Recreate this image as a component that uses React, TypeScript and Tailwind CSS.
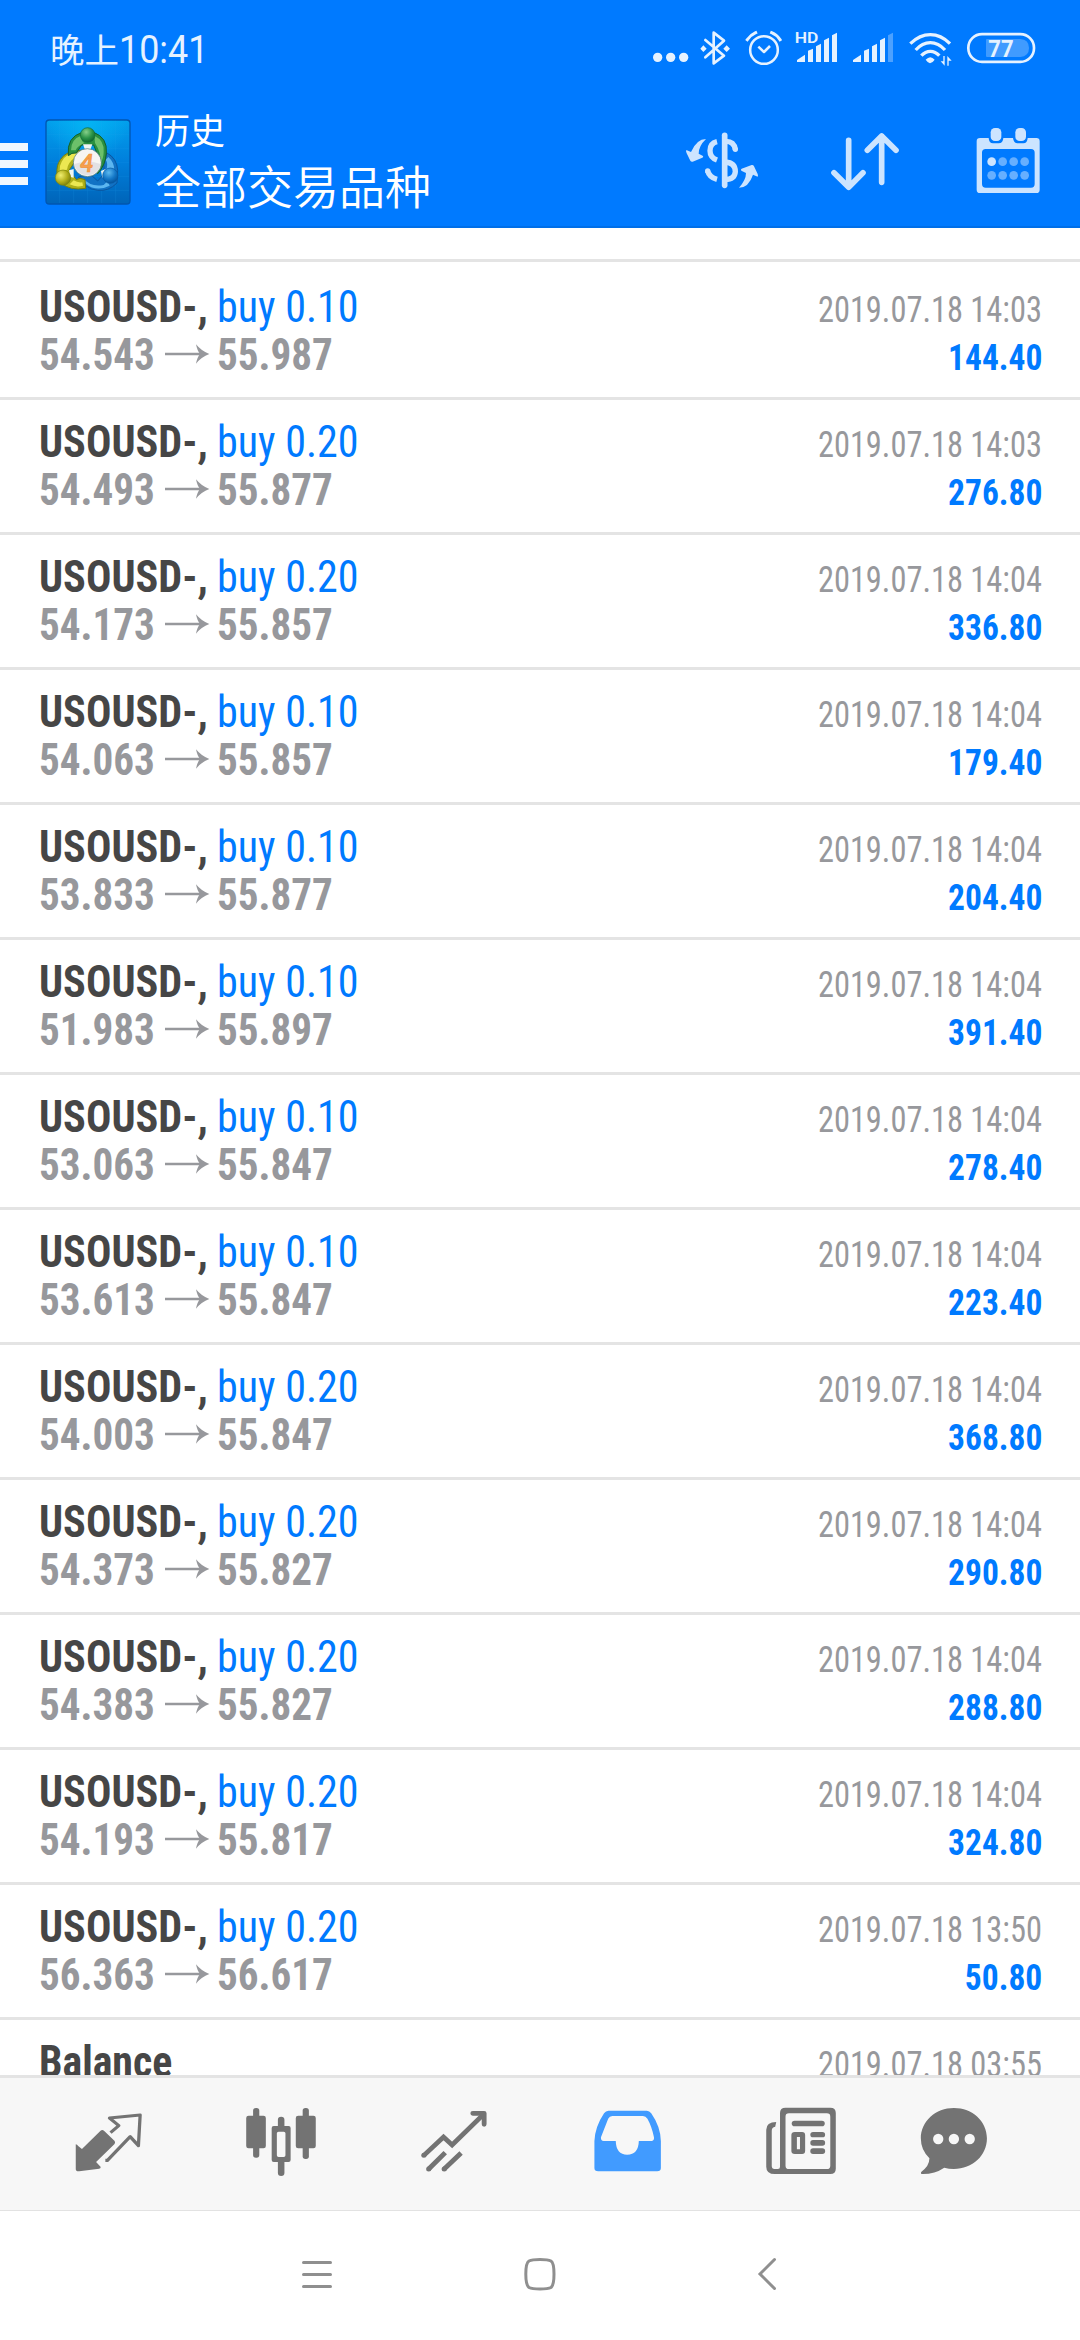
import type { ReactNode } from "react";

type Deal = { volume: string; open: string; close: string; time: string; profit: string };

const deals: Deal[] = [
  { volume: "0.10", open: "54.543", close: "55.987", time: "2019.07.18 14:03", profit: "144.40" },
  { volume: "0.20", open: "54.493", close: "55.877", time: "2019.07.18 14:03", profit: "276.80" },
  { volume: "0.20", open: "54.173", close: "55.857", time: "2019.07.18 14:04", profit: "336.80" },
  { volume: "0.10", open: "54.063", close: "55.857", time: "2019.07.18 14:04", profit: "179.40" },
  { volume: "0.10", open: "53.833", close: "55.877", time: "2019.07.18 14:04", profit: "204.40" },
  { volume: "0.10", open: "51.983", close: "55.897", time: "2019.07.18 14:04", profit: "391.40" },
  { volume: "0.10", open: "53.063", close: "55.847", time: "2019.07.18 14:04", profit: "278.40" },
  { volume: "0.10", open: "53.613", close: "55.847", time: "2019.07.18 14:04", profit: "223.40" },
  { volume: "0.20", open: "54.003", close: "55.847", time: "2019.07.18 14:04", profit: "368.80" },
  { volume: "0.20", open: "54.373", close: "55.827", time: "2019.07.18 14:04", profit: "290.80" },
  { volume: "0.20", open: "54.383", close: "55.827", time: "2019.07.18 14:04", profit: "288.80" },
  { volume: "0.20", open: "54.193", close: "55.817", time: "2019.07.18 14:04", profit: "324.80" },
  { volume: "0.20", open: "56.363", close: "56.617", time: "2019.07.18 13:50", profit: "50.80" },
];

function StatusBar() {
  return (
    <div className="flex h-[100px] items-start justify-between pl-[50px] pr-[44px] pt-[30px] text-[#e6f2ff]">
      <div className="-mt-px flex h-[38px] items-baseline whitespace-nowrap leading-[38px]">
        <span className="font-['Noto_Sans_CJK_SC',sans-serif] text-[34.5px]">晚上</span>
        <span className="origin-left scale-x-[0.92] font-[Roboto,sans-serif] text-[39px]">10:41</span>
      </div>
      <div className="flex h-[37px]">
        <svg className="h-[37px] w-[36px]" viewBox="39 90 108 111" fill="currentColor">
          <circle cx="53" cy="172" r="14" />
          <circle cx="92" cy="172" r="14" />
          <circle cx="131" cy="172" r="14" />
        </svg>
        <svg className="ml-[11px] h-[37px] w-[31px]" viewBox="180 90 93 111" fill="none" stroke="currentColor" strokeWidth="8">
          <path d="M196 120 L252 167 L221 190 V98 L252 122 L196 172" strokeLinejoin="round" strokeLinecap="round" />
          <path d="M181 146 l9 -10 l10 10 l-10 10z M250 146 l10 -10 l10 10 l-10 10z" fill="currentColor" stroke="none" />
        </svg>
        <svg className="ml-[14px] h-[37px] w-[37px]" viewBox="315 90 111 111" fill="none" stroke="currentColor" strokeWidth="7.500">
          <circle cx="372" cy="150" r="41.500" />
          <path d="M355 140 L372 156 L390 138" strokeLinejoin="round" />
          <path d="M322 119 Q333 104 347 98 M395 98 Q410 104 420 119" strokeWidth="9" strokeLinecap="square" />
        </svg>
        <svg className="ml-[13px] h-[37px] w-[43px]" viewBox="465 90 129 111" fill="currentColor">
          <text x="464" y="129" fontFamily="Roboto, sans-serif" fontWeight="600" fontSize="46" textLength="71" lengthAdjust="spacingAndGlyphs">HD</text>
          <path d="M471 186 V180 L495 164 V186z M504 186 V152 L519 146 V186z M528 186 V139 L543 131 V186z M552 186 V121 L567 113 V186z M576 186 V106 L591 98 V186z" />
        </svg>
        <svg className="ml-[14px] h-[37px] w-[42px]" viewBox="636 90 126 111" fill="currentColor">
          <path d="M639 186 V180 L663 164 V186z M672 186 V152 L687 146 V186z M696 186 V139 L711 131 V186z M720 186 V121 L735 113 V186z" />
          <path d="M744 186 V106 L759 98 V186z" opacity="0.33" />
        </svg>
        <svg className="ml-[14px] h-[37px] w-[45px]" viewBox="804 90 135 111" fill="none" stroke="currentColor" strokeWidth="10">
          <path d="M811 131 Q839 104 871 104 Q903 104 930 131 M827 150 Q847 128 871 128 Q895 128 915 150 M844 167 Q856 154 871 154 Q886 154 898 167" />
          <path d="M857 179 Q871 164 884 179 Q878 188 870 190 Q863 188 857 179z" fill="currentColor" stroke="none" />
          <path d="M910 168 H914 V197 L902 184 H910z M922 197 V168 L935 182 H926 V197z" fill="currentColor" stroke="none" />
        </svg>
        <svg className="ml-[13px] h-[37px] w-[70px]" viewBox="978 90 210 111" fill="none">
          <rect x="985" y="102.500" width="197" height="83" rx="41" stroke="currentColor" strokeWidth="8" />
          <path d="M1041 117 H1141 Q1167 119 1167 144 Q1167 169 1141 171 H1041 Q1038 171 1038 168 V120 Q1038 117 1041 117z" fill="#409bff" />
          <text x="1045" y="170" fill="currentColor" fontFamily="Roboto, sans-serif" fontWeight="700" fontSize="74" textLength="76" lengthAdjust="spacingAndGlyphs">77</text>
        </svg>
      </div>
    </div>
  );
}

function Logo() {
  return (
    <svg className="ml-[17px] mt-[19px] h-[86px] w-[86px] shrink-0" viewBox="46 58 258 258">
      <defs>
        <linearGradient id="sky" x1="0" y1="0" x2="0" y2="1">
          <stop offset="0" stopColor="#02a0ec" />
          <stop offset="0.5" stopColor="#007fdc" />
          <stop offset="1" stopColor="#0064b8" />
        </linearGradient>
        <radialGradient id="glow" cx="0.5" cy="0" r="0.5">
          <stop offset="0" stopColor="#04b4f4" />
          <stop offset="1" stopColor="#04b4f4" stopOpacity="0" />
        </radialGradient>
        <radialGradient id="green" cx="0.4" cy="0.3" r="0.7">
          <stop offset="0" stopColor="#86d08a" />
          <stop offset="0.6" stopColor="#2c9448" />
          <stop offset="1" stopColor="#116a30" />
        </radialGradient>
        <radialGradient id="yellow" cx="0.35" cy="0.35" r="0.7">
          <stop offset="0" stopColor="#f0ee70" />
          <stop offset="0.6" stopColor="#b4b01c" />
          <stop offset="1" stopColor="#7c800c" />
        </radialGradient>
        <radialGradient id="blue" cx="0.4" cy="0.3" r="0.7">
          <stop offset="0" stopColor="#5cb8ee" />
          <stop offset="0.6" stopColor="#1478c8" />
          <stop offset="1" stopColor="#0456a0" />
        </radialGradient>
      </defs>
      <rect x="49" y="61" width="252" height="252" rx="10" fill="url(#sky)" stroke="#0056b0" strokeWidth="4" />
      <rect x="51" y="63" width="248" height="248" rx="8" fill="url(#glow)" />
      <path d="M90 63V310M132 63V310M174 63V310M216 63V310M258 63V310M52 104H298M52 146H298M52 188H298M52 230H298M52 272H298" stroke="#28a4f0" strokeWidth="1.500" opacity="0.3" />
      <path d="M232 160 Q262 176 264 212 L262 250 Q236 276 204 272 Q166 268 146 232 L180 222 L204 244 L224 222 L222 190z" fill="#1272c4" stroke="#0a56a0" strokeWidth="3" />
      <path d="M236 172 Q254 188 254 212 L230 210 Q236 190 228 180z M160 236 Q184 264 222 256 L232 246 Q240 254 240 258 Q200 278 168 252z" fill="#5cb6f0" />
      <path d="M156 152 Q112 150 92 180 Q80 196 82 222 L96 250 Q120 274 168 266 L166 240 Q150 232 140 240 L118 212 L134 188z" fill="#aeb01a" stroke="#76800c" strokeWidth="3" />
      <path d="M142 158 Q110 160 96 186 Q88 200 90 214 L112 210 Q114 188 138 172z M120 254 Q140 264 160 258 L158 248 Q144 250 132 242z" fill="#ece852" />
      <path d="M116 168 Q110 112 158 98 H192 Q234 114 230 160 Q228 196 204 222 L190 200 L204 166 L192 136 H156 L140 160 Q126 158 116 168z" fill="#2a9040" stroke="#12602c" strokeWidth="3" />
      <path d="M124 152 Q124 118 154 108 Q154 124 164 130 Q144 138 138 152z M194 108 Q224 122 222 156 Q222 176 212 192 Q216 160 196 130z" fill="#6cc06a" />
      <path d="M160 134 H188 L182 150 H166z M118 212 L132 208 V234 L122 232z M214 214 L228 208 L230 224 L218 234z" fill="#eef6f2" />
      <circle cx="174" cy="106" r="22" fill="url(#green)" stroke="#156c38" strokeWidth="2" />
      <circle cx="100" cy="234" r="23" fill="url(#yellow)" stroke="#7c840c" strokeWidth="2" />
      <circle cx="242" cy="228" r="23" fill="url(#blue)" stroke="#0858a0" strokeWidth="2" />
      <circle cx="173" cy="189" r="42" fill="#f6f5f3" stroke="#3f6f70" strokeWidth="2" />
      <path d="M134 193 Q174 180 213 193 A40 40 0 0 1 134 193z" fill="#e2e1e4" />
      <text x="151" y="216" fontFamily="Lato, sans-serif" fontWeight="700" fontStyle="italic" fontSize="74" textLength="41" lengthAdjust="spacingAndGlyphs" fill="#f7a04c" stroke="#f09038" strokeWidth="2">4</text>
    </svg>
  );
}

function TitleBar() {
  return (
    <div className="flex h-[126px] items-start font-['Noto_Sans_CJK_SC',sans-serif] text-white">
      <div className="mt-[43px] flex w-[28px] flex-col gap-[9px]">
        <div className="h-[8px] bg-[#f0f7ff]" />
        <div className="h-[8px] bg-[#f0f7ff]" />
        <div className="h-[8px] bg-[#f0f7ff]" />
      </div>
      <Logo />
      <div className="ml-[24px] mt-[5px] grow whitespace-nowrap">
        <div className="text-[35px] leading-[48px]">历史</div>
        <div className="text-[46px] leading-[62px] font-[350]">全部交易品种</div>
      </div>
      <div className="flex items-start pt-[25px] text-[#cce4ff]">
        <svg className="h-[70px] w-[76px]" viewBox="132 375 228 210" fill="none" stroke="currentColor">
          <path d="M254 406 V556" strokeWidth="17" strokeLinecap="round" />
          <path d="M231 425 Q210 430 210 452 Q210 472 231 480 M203 513 Q208 532 231 538" strokeWidth="16" />
          <circle cx="203" cy="513" r="8" fill="currentColor" stroke="none" />
          <path d="M258 424 Q282 424 286 448 M256 486 Q286 488 286 515 Q284 538 256 538" strokeWidth="16" />
          <circle cx="286" cy="448" r="8" fill="currentColor" stroke="none" />
          <path d="M198 417 Q170 417 153 456 L139 450 Q137 454 140 460 L151 482 Q153 486 158 485 L187 473 Q191 471 189 468 L176 461 Q176 438 198 417z" fill="currentColor" stroke="none" />
          <path d="M297 563 Q326 563 339 524 L353 530 Q355 527 353 522 L342 499 Q340 494 335 495 L305 506 Q301 508 304 512 L318 519 Q318 540 297 563z" fill="currentColor" stroke="none" />
        </svg>
        <svg className="ml-[67px] h-[70px] w-[76px]" viewBox="561 375 228 210" fill="none" stroke="currentColor" strokeWidth="17" strokeLinecap="round" strokeLinejoin="round">
          <path d="M626 421 V560 M582 518 L626 562 L669 518 M725 547 V408 M682 451 L725 408 L768 451" />
        </svg>
        <svg className="ml-[71px] mr-[38px] h-[70px] w-[68px]" viewBox="1003 375 204 210" fill="currentColor">
          <path fillRule="evenodd" d="M1021 414 H1047 Q1048 430 1060 430 H1077 Q1090 430 1091 414 H1120 Q1122 430 1134 430 H1151 Q1163 430 1164 414 H1190 Q1200 414 1200 424 V569 Q1200 579 1190 579 H1021 Q1011 579 1011 569 V424 Q1011 414 1021 414z M1038 447 Q1027 447 1027 458 V552 Q1027 563 1038 563 H1174 Q1185 563 1185 552 V458 Q1185 447 1174 447z" />
          <rect x="1053" y="384" width="32" height="39" rx="13" />
          <rect x="1127" y="384" width="32" height="39" rx="13" />
          <circle cx="1056" cy="485" r="13" />
          <g fill="#66afff">
            <circle cx="1089" cy="485" r="13" />
            <circle cx="1122" cy="485" r="13" />
            <circle cx="1155" cy="485" r="13" />
            <circle cx="1056" cy="526" r="13" />
            <circle cx="1089" cy="526" r="13" />
            <circle cx="1122" cy="526" r="13" />
            <circle cx="1155" cy="526" r="13" />
          </g>
        </svg>
      </div>
    </div>
  );
}

function DateText({ children }: { children: ReactNode }) {
  return <span className="ml-auto origin-right scale-x-[0.9] text-[36px] text-[#97989c]">{children}</span>;
}

function DealRow({ deal }: { deal: Deal }) {
  return (
    <div className="h-[135px] border-b-[3px] border-[#e4e4e4] pl-[39px] pr-[38px] pt-[18px] leading-[48px] first:h-[138px] first:pt-[21px]">
      <div className="flex h-[48px] items-baseline whitespace-nowrap">
        <div className="w-[178px]">
          <span className="inline-block origin-left scale-x-[0.96] text-[44px] font-bold text-[#464646]">USOUSD-,</span>
        </div>
        <span className="origin-left scale-x-[0.955] text-[44px] text-[#007aff]">buy {deal.volume}</span>
        <DateText>{deal.time}</DateText>
      </div>
      <div className="flex h-[48px] items-baseline whitespace-nowrap font-bold">
        <div className="flex w-[178px] items-baseline text-[44px] text-[#97989c]">
          <div className="w-[126px]">
            <span className="inline-block origin-left scale-x-[0.935]">{deal.open}</span>
          </div>
          <svg className="mt-[13px] h-[20px] w-[45px] self-start" viewBox="495 313 135 60">
            <path d="M495 343 H600" stroke="currentColor" strokeWidth="7" />
            <path d="M588 314 Q604 334 628 343 Q604 352 588 372 Q592 352 600 343 Q592 334 588 314z" fill="currentColor" />
          </svg>
        </div>
        <span className="origin-left scale-x-[0.935] text-[44px] text-[#97989c]">{deal.close}</span>
        <span className="ml-auto origin-right scale-x-[0.93] text-[36px] text-[#007aff]">{deal.profit}</span>
      </div>
    </div>
  );
}

function TabBar() {
  return (
    <div className="flex h-[136px] items-start border-b border-t-[3px] border-b-[#e2e2e2] border-t-[#e4e4e4] bg-[#f7f7f7] pl-[74px] pt-[28px] text-[#737373]">
      <svg className="h-[72px] w-[72px]" viewBox="214.900 378 209.100 216" preserveAspectRatio="none">
        <path d="M220 493 Q224 493 227 498 L238 507 L292 452 Q297 448 302 452 L333 483 Q336 488 332 493 L279 546 L292 560 Q294 564 288 566 L230 574 Q220 575 220 567z" fill="currentColor" />
        <path d="M321 458 L345 437 L318 414 L407 405 L402 497 L378 470 L312 541 H306" fill="none" stroke="currentColor" strokeWidth="9.500" strokeLinejoin="round" />
      </svg>
      <svg className="ml-[100px] h-[72px] w-[72px]" viewBox="714.400 378 209.100 216" preserveAspectRatio="none" fill="currentColor">
        <rect x="735" y="384" width="18" height="149" rx="8" />
        <rect x="715" y="407" width="57" height="98" rx="7" />
        <rect x="879" y="384" width="18" height="153" rx="8" />
        <rect x="859" y="407" width="58" height="98" rx="7" />
        <path d="M807 445 V419 Q807 410 816.500 410 Q826 410 826 419 V445z M807 540 H826 V579 Q826 588 816.500 588 Q807 588 807 579z" />
        <path fillRule="evenodd" d="M795 438 H838 Q844 438 844 444 V540 Q844 546 838 546 H795 Q789 546 789 540 V444 Q789 438 795 438z M809 455 Q804 455 804 460 V526 Q804 531 809 531 H824 Q829 531 829 526 V460 Q829 455 824 455z" />
      </svg>
      <svg className="ml-[101px] h-[72px] w-[72px]" viewBox="1216.800 378 209.100 216" preserveAspectRatio="none" fill="none" stroke="currentColor" strokeWidth="14">
        <path d="M1231 526 L1288 471 L1313 495 L1404 403 M1245 567 L1293 518 M1290 567 L1339 519" />
        <path d="M1373 400 H1406 V433" strokeWidth="14" strokeLinecap="round" strokeLinejoin="round" />
        <g fill="currentColor" stroke="none">
          <circle cx="1231" cy="526" r="7.500" />
          <circle cx="1245" cy="567" r="7.500" />
          <circle cx="1290" cy="567" r="7.500" />
        </g>
      </svg>
      <svg className="ml-[101px] h-[72px] w-[72px] text-[#419bff]" viewBox="151 378 209.100 216" preserveAspectRatio="none" fill="currentColor">
        <path fillRule="evenodd" d="M199 392 H310 Q318 392 323 400 Q350 440 351 483 V564 Q351 574 340 574 H169 Q158 574 158 564 V483 Q160 440 186 400 Q191 392 199 392z M210 408 Q202 408 198 416 L177 472 Q176 483 185 483 H220 Q221 524 253 524 Q286 524 287 483 H325 Q332 482 331 472 Q325 440 312 416 Q307 408 299 408z" />
      </svg>
      <svg className="ml-[101px] h-[72px] w-[72px]" viewBox="653.400 378 209.100 216" preserveAspectRatio="none" fill="currentColor">
        <path fillRule="evenodd" d="M713 383 H843 Q859 383 859 399 V566 Q859 582 843 582 H682 Q657 582 657 560 V449 Q657 427 686 426 L683 440 Q673 441 673 452 V558 Q673 567 681 567 H691 Q697 567 697 560 V399 Q697 383 713 383z M723 400 Q713 400 713 410 V557 Q713 567 723 567 H833 Q843 567 843 557 V410 Q843 400 833 400z" />
        <rect x="731" y="422" width="96" height="17" rx="8.500" />
        <path fillRule="evenodd" d="M740 456 H761 Q770 456 770 465 V513 Q770 522 761 522 H740 Q730 522 730 513 V465 Q730 456 740 456z M746 471 V508 H755 V471z" />
        <rect x="785" y="456" width="43" height="16" rx="8" />
        <rect x="785" y="480" width="43" height="17" rx="8" />
        <rect x="785" y="505" width="43" height="17" rx="8" />
      </svg>
      <svg className="ml-[82px] h-[72px] w-[72px]" viewBox="1097.700 378 209.100 216" preserveAspectRatio="none">
        <path d="M1199 384 C1253 384 1295 424 1295 475 C1295 527 1253 567 1199 567 Q1184 567 1171 563 Q1143 583 1105 582 Q1102 580 1104 576 Q1128 558 1128 535 Q1103 510 1103 475 C1103 424 1146 384 1199 384z" fill="currentColor" />
        <g fill="#f7f7f7">
          <ellipse cx="1153.500" cy="477" rx="15" ry="16" />
          <ellipse cx="1199" cy="477" rx="15" ry="16" />
          <ellipse cx="1245" cy="477" rx="15" ry="16" />
        </g>
      </svg>
    </div>
  );
}

function SystemNav() {
  return (
    <div className="flex h-[129px] items-start bg-white pt-[45px] text-[#8f8f8f]">
      <svg className="ml-[301px] h-[36px] w-[32px]" viewBox="0 0 32 36" stroke="currentColor" strokeWidth="3" strokeLinecap="round">
        <path d="M2.500 6.500 H29.500 M2.500 18.500 H29.500 M2.500 30.500 H29.500" />
      </svg>
      <svg className="ml-[190px] h-[36px] w-[34px]" viewBox="0 0 34 36" fill="none" stroke="currentColor" strokeWidth="3">
        <path d="M17 3.500 Q25 3.500 28 5 Q31 7 31 18 Q31 29 28 31.500 Q25 33 17 33 Q9 33 6 31.500 Q2.800 29 2.800 18 Q2.800 7 6 5 Q9 3.500 17 3.500z" />
      </svg>
      <svg className="ml-[200px] h-[36px] w-[20px]" viewBox="0 0 20 36" fill="none" stroke="currentColor" strokeWidth="3" strokeLinecap="round">
        <path d="M17.500 3.500 L3 18 L17.500 32.500" />
      </svg>
    </div>
  );
}

export default function App() {
  return (
    <div className="flex h-[2340px] w-[1080px] flex-col overflow-hidden bg-white">
      <header className="h-[228px] shrink-0 border-b-2 border-[#006fe8] bg-[#007aff]">
        <StatusBar />
        <TitleBar />
      </header>
      <main className="h-[1847px] shrink-0 overflow-hidden font-['Roboto_Condensed',Roboto,sans-serif]">
        <div className="h-[34px] border-b-[3px] border-[#e4e4e4]" />
        <div>
          {deals.map((deal, i) => (
            <DealRow key={i} deal={deal} />
          ))}
          <div className="flex h-[66px] items-baseline whitespace-nowrap pl-[39px] pr-[38px] pt-[18px] leading-[48px]">
            <span className="origin-left scale-x-[0.95] text-[44px] font-bold text-[#464646]">Balance</span>
            <DateText>2019.07.18 03:55</DateText>
          </div>
        </div>
      </main>
      <TabBar />
      <SystemNav />
    </div>
  );
}
